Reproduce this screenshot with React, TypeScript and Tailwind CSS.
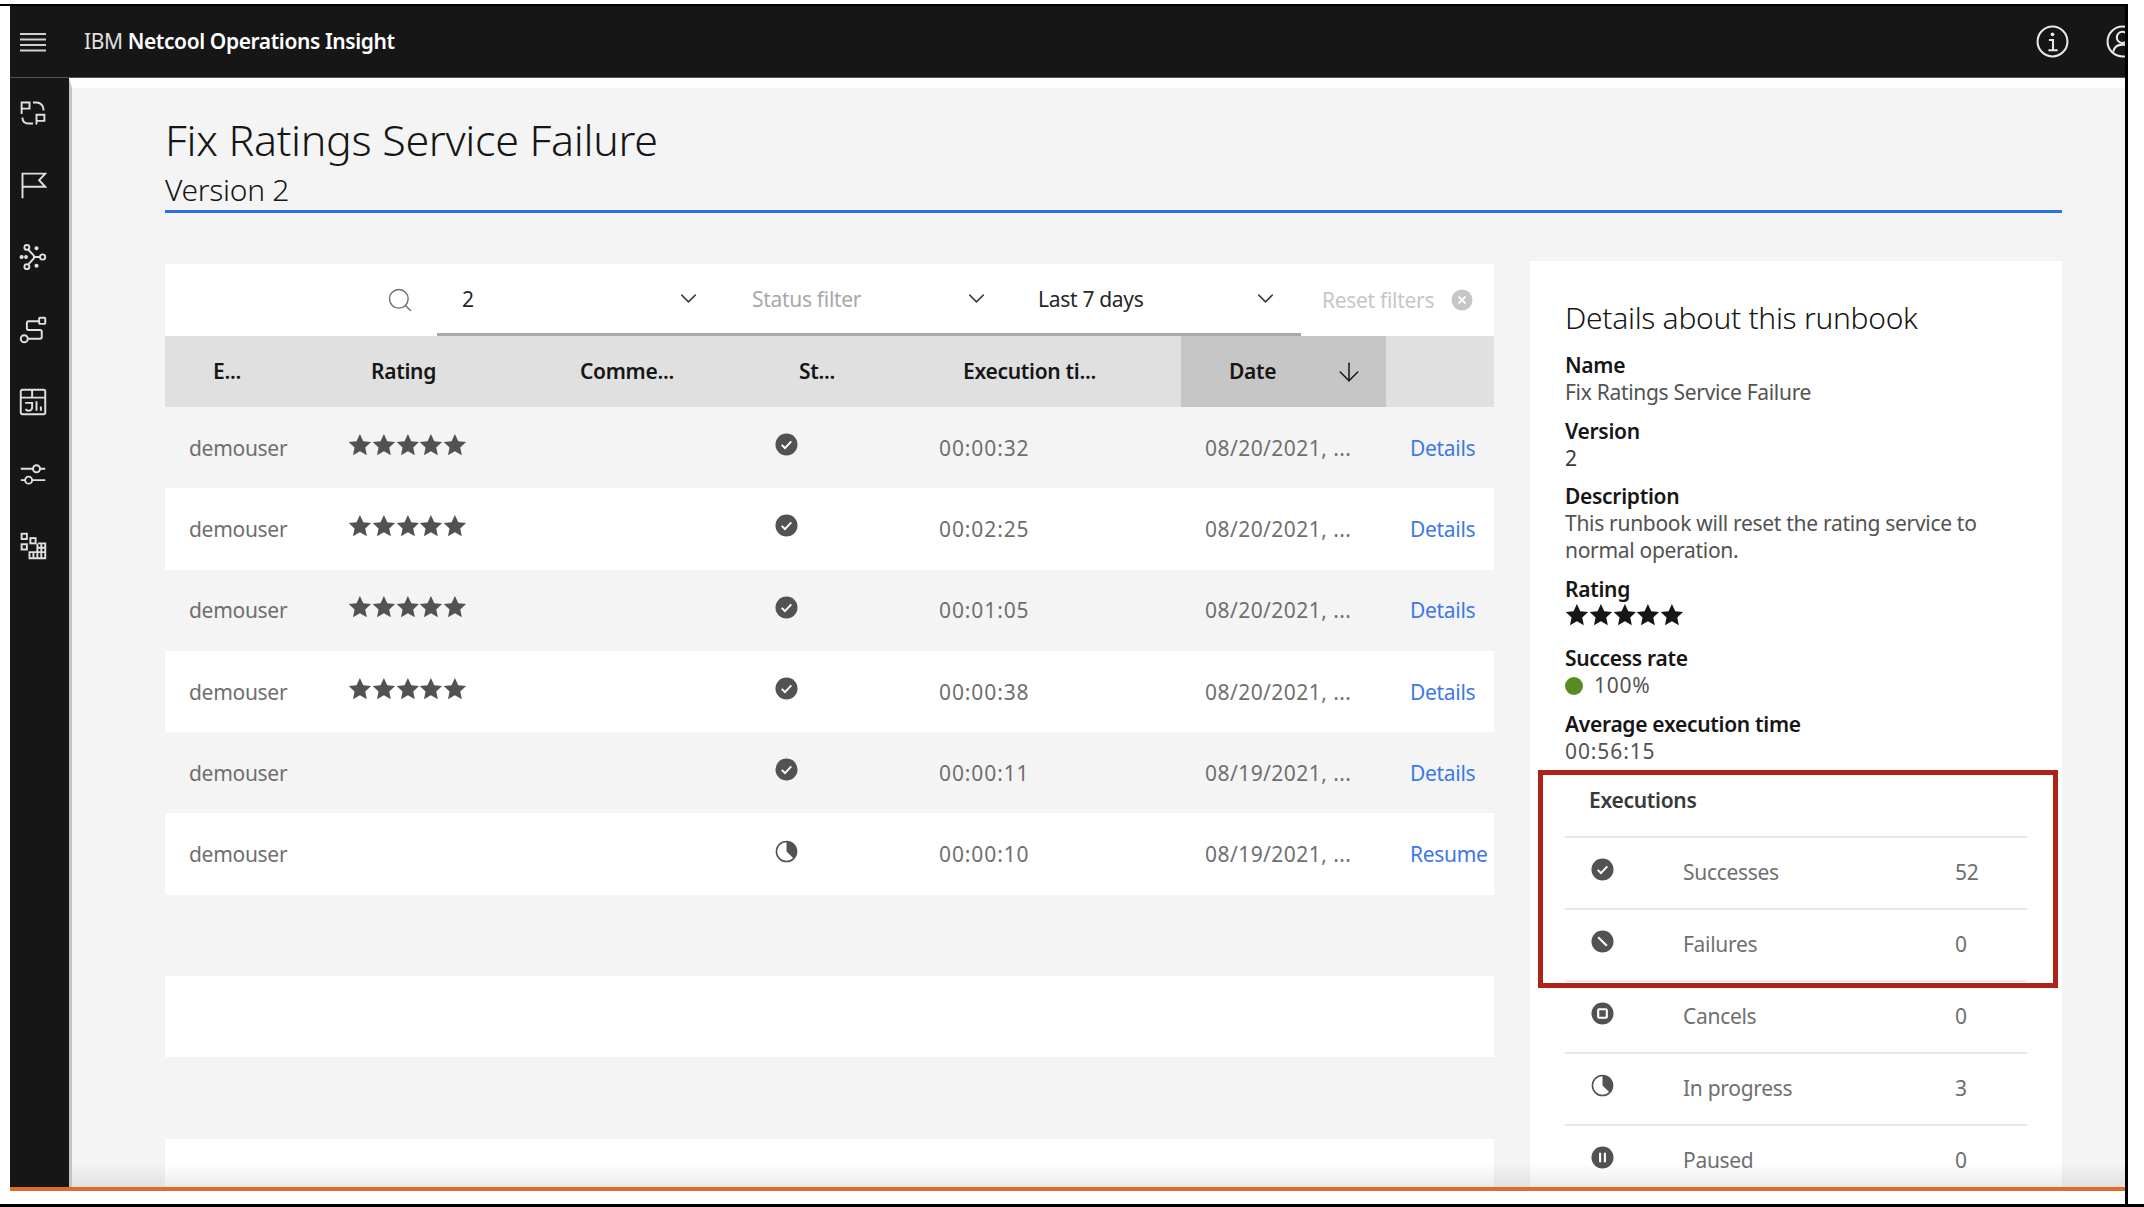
import React from 'react'
import { ChevronDown, Search, ArrowDown } from 'lucide-react'

const font = "[font-family:'Noto_Sans',sans-serif]"

function Star({ className }: { className: string }) {
  return (
    <svg viewBox="0 0 24 24" className={className} fill="currentColor">
      <path d="M12 1l3.400 7.200 7.900.9-5.900 5.400 1.600 7.900L12 18.500l-7 3.900 1.600-7.900L.7 9.100l7.900-.9z" />
    </svg>
  )
}

function Stars({ className }: { className: string }) {
  return (
    <div className={`flex ${className}`}>
      {[0, 1, 2, 3, 4].map((i) => (
        <Star key={i} className="w-[23.8px] h-[23.8px]" />
      ))}
    </div>
  )
}

type StatusKind = 'success' | 'failure' | 'cancel' | 'progress' | 'paused'

function StatusIcon({ kind }: { kind: StatusKind }) {
  return (
    <svg viewBox="0 0 24 24" className="w-[23px] h-[23px] text-[#525252]">
      {kind === 'progress' ? (
        <>
          <circle cx="12" cy="12" r="10.5" fill="none" stroke="currentColor" strokeWidth="1.6" />
          <path d="M12 12V1.500A10.500 10.500 0 0 1 19.400 19.400Z" fill="currentColor" />
        </>
      ) : (
        <circle cx="12" cy="12" r="11.5" fill="currentColor" />
      )}
      {kind === 'success' && <path d="M7 12.400l3.400 3.300L17 8.800" fill="none" stroke="#fff" strokeWidth="2" />}
      {kind === 'failure' && <path d="M7.500 7.500l9 9" fill="none" stroke="#fff" strokeWidth="2.200" />}
      {kind === 'cancel' && <rect x="7.500" y="7.500" width="9" height="9" rx="1" fill="none" stroke="#fff" strokeWidth="2.200" />}
      {kind === 'paused' && <path d="M9.500 7v10M14.500 7v10" fill="none" stroke="#fff" strokeWidth="2.200" />}
    </svg>
  )
}

function NavIcon({ children }: { children: React.ReactNode }) {
  return (
    <svg viewBox="0 0 32 32" className="w-[28px] h-[28px] text-[#e0e0e0]" fill="none" stroke="currentColor" strokeWidth="2.200">
      {children}
    </svg>
  )
}

const navIcons = [
  <>
    <path d="M3 17V4h9v7H3" />
    <path d="M16 4h4a8 8 0 0 1 8 8v1" />
    <path d="M20 29V18h9v7h-9" />
    <path d="M4 21v1a6 6 0 0 0 6 6h6" />
  </>,
  <path d="M4 31V3h26l-7 7.500 7 7.500H4" />,
  <>
    <path d="M11 8l6 6.500v3l-6 6.500M17 16h7" />
    <circle cx="9" cy="5" r="2.800" />
    <circle cx="27" cy="16" r="3" />
    <circle cx="9" cy="27" r="2.800" />
    <circle cx="3" cy="16" r="1.300" fill="currentColor" />
    <circle cx="8" cy="16" r="1.100" fill="currentColor" />
    <circle cx="20" cy="6" r="1.300" fill="currentColor" />
    <circle cx="20" cy="26" r="1.300" fill="currentColor" />
  </>,
  <>
    <rect x="23" y="2" width="7" height="7" rx="1" />
    <circle cx="6" cy="26" r="4" />
    <path d="M23 6H11a2 2 0 0 0-2 2v6a2 2 0 0 0 2 2h13a2 2 0 0 1 2 2v6a2 2 0 0 1-2 2H10" />
  </>,
  <>
    <rect x="2" y="2" width="28" height="28" rx="2" />
    <path d="M2 11h28M15 2v9" />
    <path d="M7 17h8v5a4 4 0 0 1-7.500 2" />
    <path d="M20 15v11M25 21v5" />
  </>,
  <>
    <path d="M2 10h14M24 10h6M2 23h5M15 23h15" />
    <circle cx="20" cy="10" r="4" />
    <circle cx="11" cy="23" r="4" />
  </>,
  <>
    <rect x="3" y="2" width="6" height="6" />
    <rect x="13" y="7" width="6" height="6" />
    <rect x="3" y="14" width="6" height="6" />
    <path d="M22 13h8v17H12v-7h18M21 13v17M16.500 23v7M25.500 13v17M21 18h9" />
  </>,
]

const rows = [
  { time: '00:00:32', date: '08/20/2021, ...', rated: true, status: 'success' as StatusKind, action: 'Details' },
  { time: '00:02:25', date: '08/20/2021, ...', rated: true, status: 'success' as StatusKind, action: 'Details' },
  { time: '00:01:05', date: '08/20/2021, ...', rated: true, status: 'success' as StatusKind, action: 'Details' },
  { time: '00:00:38', date: '08/20/2021, ...', rated: true, status: 'success' as StatusKind, action: 'Details' },
  { time: '00:00:11', date: '08/19/2021, ...', rated: false, status: 'success' as StatusKind, action: 'Details' },
  { time: '00:00:10', date: '08/19/2021, ...', rated: false, status: 'progress' as StatusKind, action: 'Resume' },
]

const executions: { kind: StatusKind; label: string; count: number }[] = [
  { kind: 'success', label: 'Successes', count: 52 },
  { kind: 'failure', label: 'Failures', count: 0 },
  { kind: 'cancel', label: 'Cancels', count: 0 },
  { kind: 'progress', label: 'In progress', count: 3 },
  { kind: 'paused', label: 'Paused', count: 0 },
]

const tableCols = 'grid grid-cols-[160px_207px_219px_164px_266px_205px_108px]'

function Field({ label, children }: { label: string; children: React.ReactNode }) {
  return (
    <div>
      <div className="h-[27px] leading-[27px] font-semibold text-[#161616]">{label}</div>
      {children}
    </div>
  )
}

function Filter({ className, text, muted }: { className: string; text: string; muted?: boolean }) {
  return (
    <div className={`flex items-center justify-between ${className}`}>
      <span className={`pt-[2px] ${muted ? 'text-[#a8a8a8]' : 'text-[#262626]'}`}>{text}</span>
      <ChevronDown className="w-[27px] h-[27px] text-[#393939]" strokeWidth={1.3} />
    </div>
  )
}

export default function App() {
  return (
    <div className={`w-[2144px] h-[1207px] bg-white overflow-hidden flex flex-col text-[21px] tracking-[-0.3px] ${font}`}>
      <div className="w-[2128px] h-[1204px] pt-1">
        <div className="h-full border-t-2 border-r-[3px] border-black pl-[10px] flex flex-col">
          {/* top bar */}
          <header className="h-[72px] shrink-0 bg-[#161616] border-b border-[#555] flex items-center overflow-hidden relative">
            <svg viewBox="0 0 26 20" className="ml-[10px] w-[26px] h-[20px] text-[#d0d0d0]" stroke="currentColor" strokeWidth="2">
              <path d="M0 2h26M0 7.500h26M0 13h26M0 18.500h26" />
            </svg>
            <div className="ml-[38px] pt-[1px] text-[#e0e0e0] tracking-[-0.4px]">
              IBM <span className="font-semibold text-white">Netcool Operations Insight</span>
            </div>
            <div className="ml-auto flex items-center gap-[37px] mr-[-14px]">
              <svg viewBox="0 0 32 32" className="w-[33px] h-[33px] text-[#e8e8e8]" fill="none" stroke="currentColor" strokeWidth="2">
                <circle cx="16" cy="16" r="14.500" />
                <path d="M12.500 14.500H16.500V24M12 24.500h9" />
                <circle cx="16" cy="9" r="1.800" fill="currentColor" stroke="none" />
              </svg>
              <svg viewBox="0 0 32 32" className="w-[33px] h-[33px] text-[#e8e8e8]" fill="none" stroke="currentColor" strokeWidth="2">
                <circle cx="16" cy="16" r="14.500" />
                <circle cx="16" cy="12" r="5.500" />
                <path d="M7 26c1-5 4-7 9-7s8 2 9 7" />
              </svg>
            </div>
          </header>

          <div className="flex-1 min-h-0 flex relative">
            {/* side nav */}
            <nav className="w-[59px] shrink-0 bg-[#161616] flex flex-col items-center pt-[21px] pr-[14px] gap-[44.200px]">
              {navIcons.map((icon, i) => (
                <NavIcon key={i}>{icon}</NavIcon>
              ))}
            </nav>

            <main className="flex-1 min-w-0 bg-[#f4f4f4] border-l-[3px] border-[#c4c4c4] border-t-[10px] border-t-[#fdfdfd] overflow-hidden pl-[93px] pr-[63px]">
              <div className="pt-[30px] pb-1 border-b-[3px] border-[#2f6fe4]">
                <h1 className="h-[44px] leading-[44px] text-[43px] font-light text-[#161616]">Fix Ratings Service Failure</h1>
                <div className="mt-[12px] h-[32px] leading-[32px] text-[30px] font-light text-[#161616]">Version 2</div>
              </div>

              <div className="mt-[48px] flex gap-[36px] items-start">
                {/* executions table */}
                <section className="w-[1329px] shrink-0 pt-[3px]">
                  <div className="h-[72px] bg-white flex">
                    <div className="w-[272px] flex items-center justify-end pr-[23px]">
                      <Search className="w-[28px] h-[28px] text-[#6f6f6f]" strokeWidth={1.2} />
                    </div>
                    <div className="w-[864px] flex border-b-[3px] border-[#a8a8a8]">
                      <Filter className="w-[291px] pl-[25px] pr-[26px]" text="2" />
                      <Filter className="w-[285px] pl-[24px] pr-[23px]" text="Status filter" muted />
                      <Filter className="w-[288px] pl-[25px] pr-[22px]" text="Last 7 days" />
                    </div>
                    <div className="flex-1 flex items-center justify-between pl-[21px] pr-[21px]">
                      <span className="pt-[1px] text-[#c6c6c6]">Reset filters</span>
                      <svg viewBox="0 0 22 22" className="w-[22px] h-[22px]">
                        <circle cx="11" cy="11" r="10.500" fill="#c6c6c6" />
                        <path d="M7.500 7.500l7 7M14.500 7.500l-7 7" stroke="#fff" strokeWidth="1.800" />
                      </svg>
                    </div>
                  </div>

                  <div className={`${tableCols} h-[71px] bg-[#e0e0e0] items-center font-semibold text-[#161616]`}>
                    <div className="pl-[48px]">E...</div>
                    <div className="pl-[46px]">Rating</div>
                    <div className="pl-[48px]">Comme...</div>
                    <div className="pl-[48px]">St...</div>
                    <div className="pl-[48px]">Execution ti...</div>
                    <div className="h-full bg-[#c6c6c6] flex items-center pl-[48px] pr-[22px] justify-between">
                      <span>Date</span>
                      <ArrowDown className="w-[30px] h-[30px]" strokeWidth={1.2} />
                    </div>
                    <div />
                  </div>

                  {rows.map((row, i) => (
                    <div key={i} className={`${tableCols} h-[81.300px] pt-[2px] items-center text-[#6f6f6f] ${i % 2 === 0 ? 'bg-[#f4f4f4]' : 'bg-white'}`}>
                      <div className="pl-[24px]">demouser</div>
                      <div className="pl-[23px] pb-[8px]">{row.rated && <Stars className="text-[#525252]" />}</div>
                      <div />
                      <div className="pl-[24px] pb-[8px]"><StatusIcon kind={row.status} /></div>
                      <div className="pl-[24px] tracking-[0.9px]">{row.time}</div>
                      <div className="pl-[24px] tracking-[0.45px]">{row.date}</div>
                      <div className="pl-[24px] text-[#3d78e8]">{row.action}</div>
                    </div>
                  ))}
                  <div className="h-[81.300px] bg-[#f4f4f4]" />
                  <div className="h-[81.300px] bg-white" />
                  <div className="h-[81.300px] bg-[#f4f4f4]" />
                  <div className="h-[81.300px] bg-white" />
                </section>

                {/* details panel */}
                <aside className="relative flex-1 min-w-0 bg-white px-[35px] pt-[39px] h-[1000px]">
                  <h2 className="h-[36px] leading-[36px] text-[30px] font-light text-[#161616]">Details about this runbook</h2>
                  <div className="mt-[16px] flex flex-col gap-[11.600px]">
                    <Field label="Name">
                      <div className="h-[27px] leading-[27px] text-[#525252]">Fix Ratings Service Failure</div>
                    </Field>
                    <Field label="Version">
                      <div className="h-[27px] leading-[27px] text-[#393939]">2</div>
                    </Field>
                    <Field label="Description">
                      <div className="leading-[27px] text-[#525252]">
                        This runbook will reset the rating service to
                        <br />
                        normal operation.
                      </div>
                    </Field>
                    <Field label="Rating">
                      <Stars className="h-[31px] text-[#161616]" />
                    </Field>
                    <Field label="Success rate">
                      <div className="h-[27px] flex items-center text-[#525252] tracking-[0.7px]">
                        <span className="w-[18px] h-[18px] rounded-full bg-[#5a8a22] mr-[11px]" />
                        100%
                      </div>
                    </Field>
                    <Field label="Average execution time">
                      <div className="h-[27px] leading-[27px] text-[#525252] tracking-[0.9px]">00:56:15</div>
                    </Field>
                  </div>

                  <div className="mt-[1px] h-[72px] pl-[24px] flex items-center font-semibold text-[#393939] border-b-2 border-[#e8e8e8]">
                    Executions
                  </div>
                  {executions.map((e) => (
                    <div key={e.label} className="h-[72px] grid grid-cols-[118px_272px_auto] items-center text-[#6f6f6f] border-b-2 border-[#e8e8e8]">
                      <div className="pl-[26px] pb-[6px]"><StatusIcon kind={e.kind} /></div>
                      <div>{e.label}</div>
                      <div>{e.count}</div>
                    </div>
                  ))}

                  {/* highlight box from the documentation */}
                  <div className="absolute left-[8px] top-[509px] w-[520px] h-[218px] border-[5px] border-[#ae2318]" />
                </aside>
              </div>
            </main>

            <div className="absolute left-[62px] right-0 bottom-0 h-[24px] bg-gradient-to-t from-[#00000014] to-transparent pointer-events-none" />
          </div>

          <div className="h-1 shrink-0 bg-[#e06c2b]" />
          <div className="h-[13px] shrink-0 bg-white" />
        </div>
      </div>
      <div className="h-[3px] bg-black" />
    </div>
  )
}
